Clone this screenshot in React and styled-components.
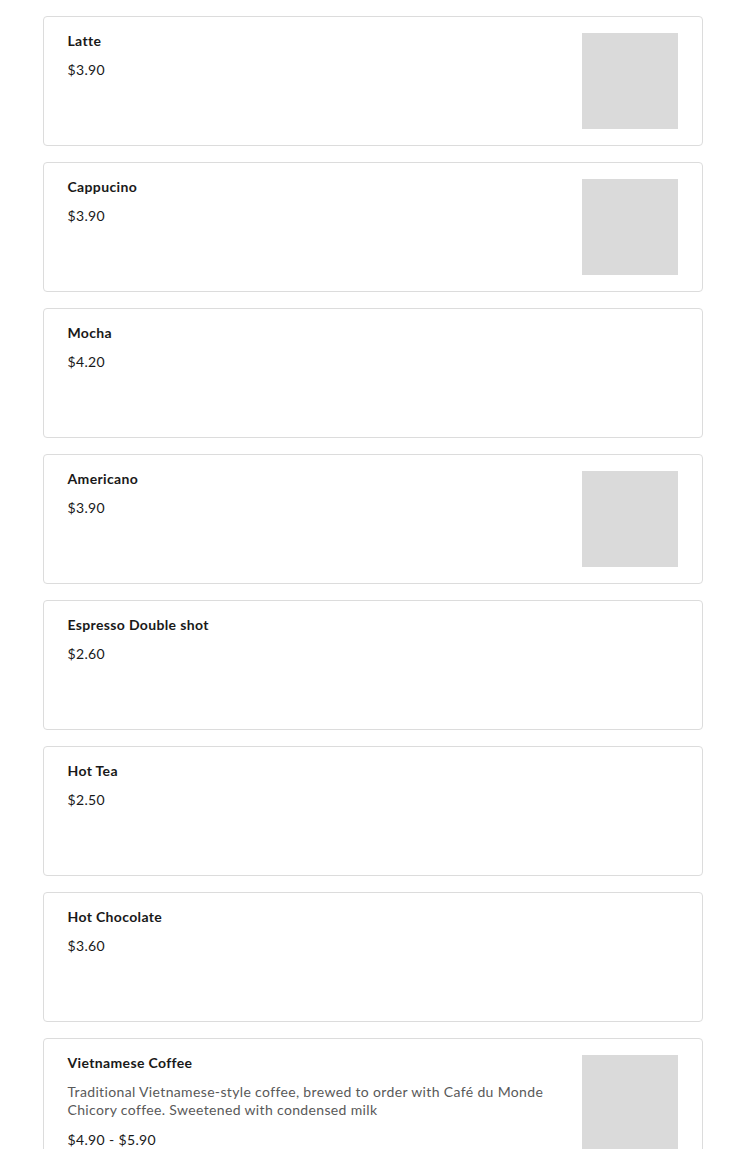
import React from "react";
import styled, { createGlobalStyle } from "styled-components";

const GlobalStyle = createGlobalStyle`
  * { box-sizing: border-box; }
  body {
    margin: 0;
    background: #fff;
    font-family: Lato, "Liberation Sans", sans-serif;
    color: #191919;
  }
`;

const List = styled.div`
  max-width: 660px;
  margin: 0 auto;
  padding: 16px 0;
  display: flex;
  flex-direction: column;
  gap: 16px;
`;

const Card = styled.div`
  display: flex;
  justify-content: space-between;
  gap: 24px;
  min-height: 130px;
  padding: 16px 24px;
  border: 1px solid #dcdcdc;
  border-radius: 4px;
  background: #fff;
`;

const Info = styled.div`
  display: flex;
  flex-direction: column;
  gap: 12px;
  flex: 1;
  min-width: 0;
  letter-spacing: 0.35px;
`;

const Title = styled.div`
  font-size: 14px;
  line-height: 16px;
  font-weight: 700;
  color: #191919;
`;

const Description = styled.div`
  font-size: 14px;
  line-height: 18px;
  color: #595959;
`;

const Price = styled.div`
  font-size: 14px;
  line-height: 18px;
  color: #191919;
`;

const Thumb = styled.div`
  flex: 0 0 96px;
  width: 96px;
  height: 96px;
  background: #dadada;
`;

const items = [
  { name: "Latte", price: "$3.90", image: true },
  { name: "Cappucino", price: "$3.90", image: true },
  { name: "Mocha", price: "$4.20" },
  { name: "Americano", price: "$3.90", image: true },
  { name: "Espresso Double shot", price: "$2.60" },
  { name: "Hot Tea", price: "$2.50" },
  { name: "Hot Chocolate", price: "$3.60" },
  {
    name: "Vietnamese Coffee",
    description:
      "Traditional Vietnamese-style coffee, brewed to order with Café du Monde Chicory coffee. Sweetened with condensed milk",
    price: "$4.90 - $5.90",
    image: true,
  },
];

const App = () => {
  return (
    <>
      <GlobalStyle />
      <List>
        {items.map((item) => (
          <Card key={item.name}>
            <Info>
              <Title>{item.name}</Title>
              {item.description && <Description>{item.description}</Description>}
              <Price>{item.price}</Price>
            </Info>
            {item.image && <Thumb />}
          </Card>
        ))}
      </List>
    </>
  );
};

export default App;
